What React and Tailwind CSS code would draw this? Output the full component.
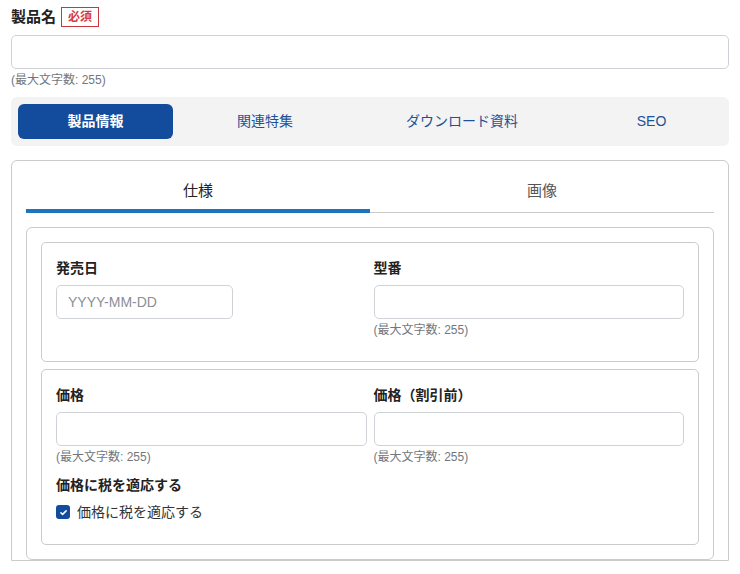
import React from "react";

const font = { fontFamily: '"Liberation Sans", "Noto Sans CJK JP", sans-serif' };

const Hint = () => (
  <p className="mt-[5px] text-[12px] leading-[12px] text-[#72777d]">(最大文字数: 255)</p>
);

const Field = ({ label, hint = true, className = "" }) => (
  <div className={className}>
    <label className="block text-[14px] leading-[20px] font-bold text-[#222]">{label}</label>
    <input
      type="text"
      className="mt-[7px] block h-[34px] w-full rounded-[5px] border border-[#cfd3d8] bg-white px-3 text-[14px] outline-none"
    />
    {hint && <Hint />}
  </div>
);

const App = () => {
  return (
    <div className="min-h-[574px] bg-white px-[11px] pt-[7px]" style={font}>
      <div className="flex items-center gap-[5px]">
        <span className="text-[15px] leading-[20px] font-bold text-[#222]">製品名</span>
        <span className="flex h-[20px] w-[38px] items-center justify-center border border-[#c8383c] text-[12px] font-bold text-[#d63a3f]">
          必須
        </span>
      </div>
      <input
        type="text"
        className="mt-[8px] block h-[34px] w-full rounded-[5px] border border-[#cfd3d8] bg-white px-3 outline-none"
      />
      <p className="mt-[5px] text-[12px] leading-[12px] text-[#72777d]">(最大文字数: 255)</p>

      <div className="mt-[11px] flex h-[49px] items-center rounded-[6px] bg-[#f3f3f3] px-[7px] text-[14px]">
        <button className="h-[35px] w-[155px] rounded-[6px] bg-[#134c9c] font-bold text-white">製品情報</button>
        <button className="h-[35px] w-[184px] text-[#1d5296]">関連特集</button>
        <button className="h-[35px] w-[210px] text-[#1d5296]">ダウンロード資料</button>
        <button className="h-[35px] flex-1 pl-[14px] text-[#1d5296]">SEO</button>
      </div>

      <div className="mt-[14px] rounded-t-[6px] border border-[#cbcbcb] px-[14px] pt-[9px] pb-0">
        <div className="flex border-b border-[#c8c8c8]">
          <div className="-mb-px flex-1 border-b-4 border-[#1f73bf] pt-[11px] pb-[8px] text-center text-[15px] leading-[20px] text-[#222]">
            仕様
          </div>
          <div className="flex-1 pt-[11px] pb-[8px] text-center text-[15px] leading-[20px] text-[#555]">画像</div>
        </div>

        <div className="mt-[14px] flex flex-col gap-[7px] rounded-[6px] border border-[#cbcbcb] p-[14px]">
          <div className="grid grid-cols-2 gap-[7px] rounded-[5px] border border-[#cbcbcb] px-[14px] pt-[15px] pb-[25px]">
            <div>
              <label className="block text-[14px] leading-[20px] font-bold text-[#222]">発売日</label>
              <input
                type="text"
                placeholder="YYYY-MM-DD"
                className="mt-[7px] block h-[34px] w-[177px] rounded-[5px] border border-[#cfd3d8] bg-white px-[11px] text-[14px] outline-none placeholder:text-[#8a8f96]"
              />
            </div>
            <Field label="型番" />
          </div>

          <div className="rounded-[5px] border border-[#cbcbcb] px-[14px] pt-[15px] pb-[22px]">
            <div className="grid grid-cols-2 gap-[7px]">
              <Field label="価格" />
              <Field label="価格（割引前）" />
            </div>
            <p className="mt-[12px] text-[14px] leading-[20px] font-bold text-[#222]">価格に税を適応する</p>
            <label className="mt-[7px] flex items-center gap-[7px] text-[14px] leading-[20px] text-[#333]">
              <span className="flex h-[14px] w-[14px] items-center justify-center rounded-[3px] bg-[#134c9c]">
                <svg width="9" height="9" viewBox="0 0 12 12" fill="none">
                  <path d="M2.5 6.3l2.3 2.2L9.5 3.8" stroke="white" strokeWidth="2" strokeLinecap="round" strokeLinejoin="round" />
                </svg>
              </span>
              価格に税を適応する
            </label>
          </div>
        </div>
      </div>
    </div>
  );
};

export default App;
